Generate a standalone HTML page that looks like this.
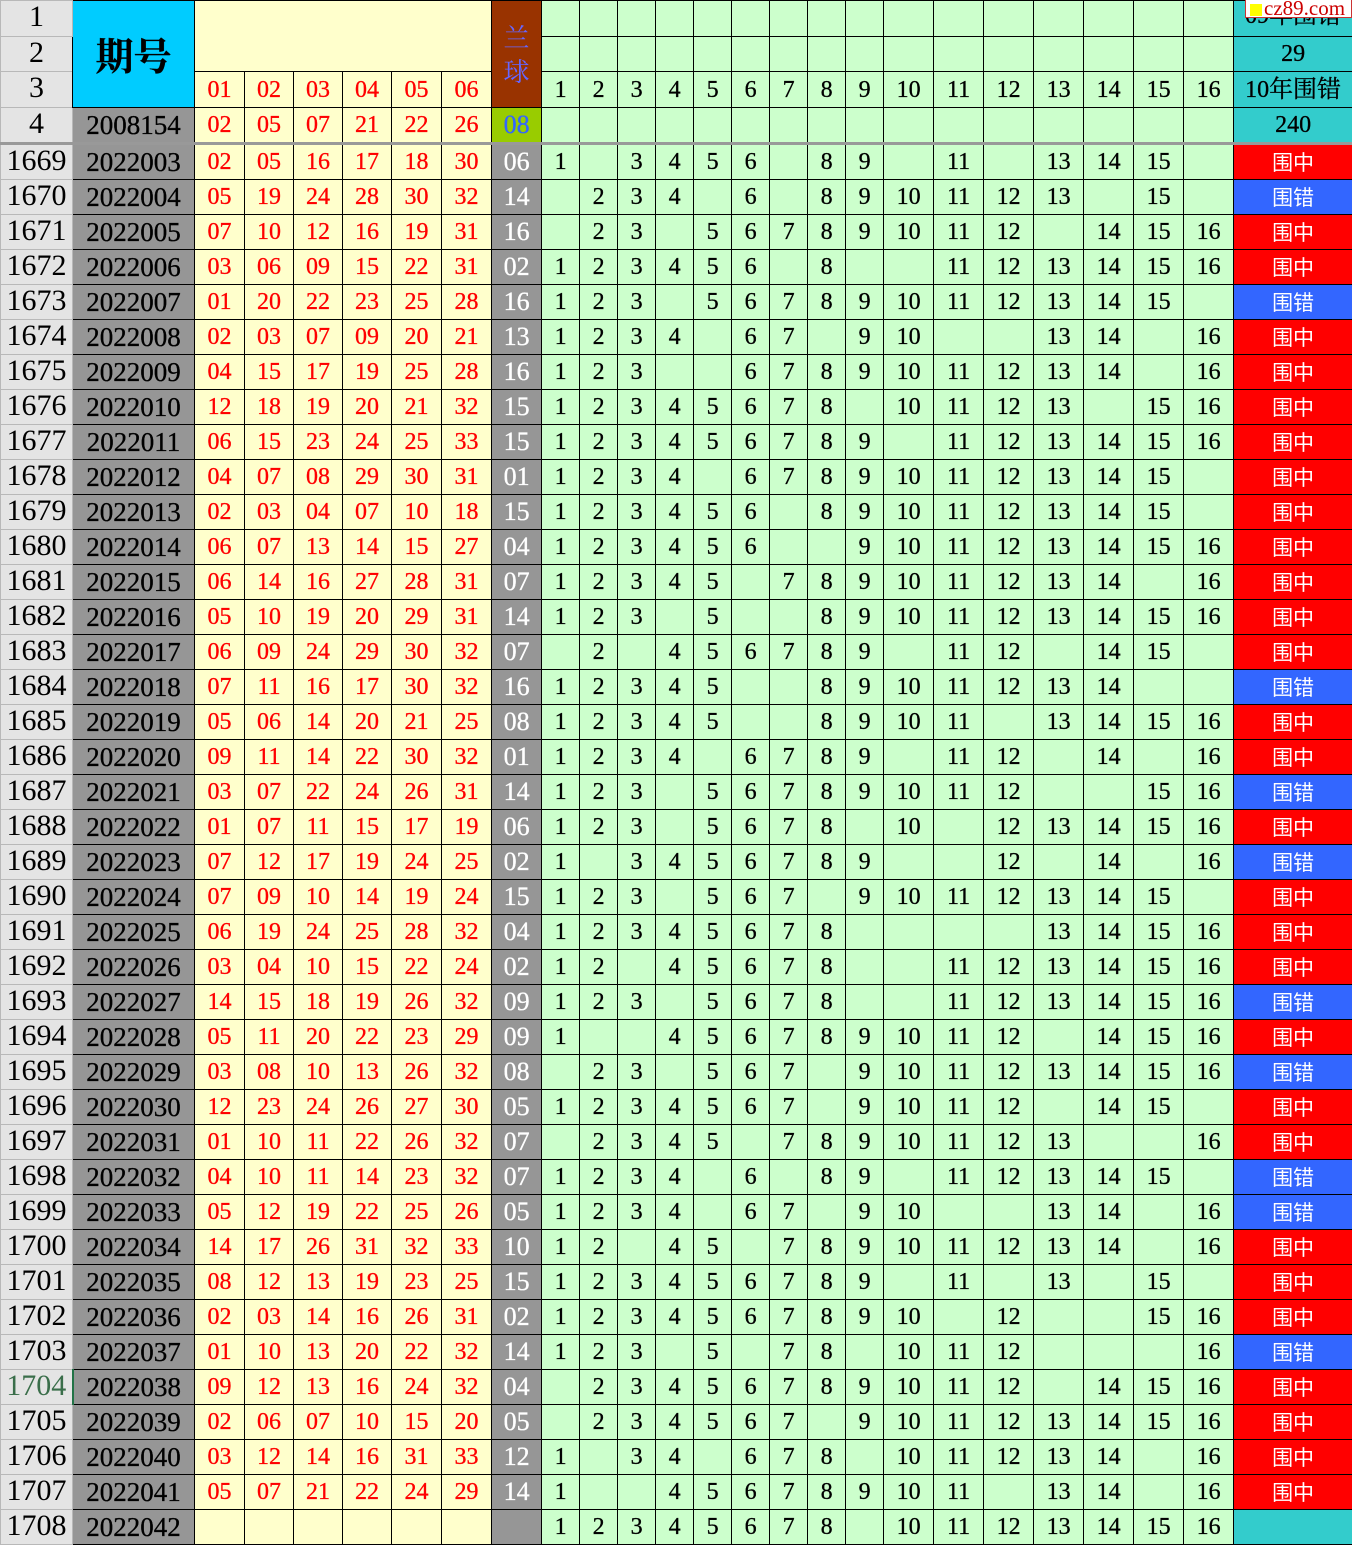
<!DOCTYPE html><html><head><meta charset="utf-8"><style>
body{margin:0;width:1352px;height:1542px;overflow:hidden;background:#fff}
table{border-collapse:collapse;table-layout:fixed;width:1352px;font-family:"Liberation Serif","Noto Serif CJK SC",serif}
tr{height:35px}
td,th{border:1px solid #000;padding:0;text-align:center;font-size:24px;line-height:34px;background:#ccffcc;color:#000;font-weight:normal;overflow:hidden;white-space:nowrap;vertical-align:bottom;-webkit-text-stroke:0.3px}
th{background:#e4e4e4;border-color:#b8b8b8;font-size:30px;line-height:32px;vertical-align:top;-webkit-text-stroke:0}
td.p{background:#969696;font-size:27px}
td.r{background:#ffffcc;color:#f00}
td.b{background:#969696;color:#fff;font-size:26px}
td.zh{background:#f00;color:#fff;font-family:"Noto Sans CJK SC",sans-serif;font-size:21px;-webkit-text-stroke:0}
td.cu{background:#3366ff;color:#fff;font-family:"Noto Sans CJK SC",sans-serif;font-size:21px;-webkit-text-stroke:0}
td.t{background:#33cccc;font-size:24px}
tr.sep td,tr.sep th{border-top:3px solid #999}
.wm{position:absolute;left:1245px;top:0;width:105px;height:17px;background:#fff;border:1px solid #c33;border-top:0;font:21px/17px "Liberation Serif",serif;color:#c00;overflow:hidden;white-space:nowrap}
.wm i{display:inline-block;width:12px;height:12px;background:#ff0;margin:0 2px 0 4px;vertical-align:-1px}
</style></head><body>
<table>
<colgroup><col style="width:72px"><col style="width:122px"><col style="width:50px"><col style="width:49px"><col style="width:49px"><col style="width:49px"><col style="width:50px"><col style="width:50px"><col style="width:50px"><col style="width:38px"><col style="width:38px"><col style="width:38px"><col style="width:38px"><col style="width:38px"><col style="width:38px"><col style="width:38px"><col style="width:38px"><col style="width:38px"><col style="width:50px"><col style="width:50px"><col style="width:50px"><col style="width:50px"><col style="width:50px"><col style="width:50px"><col style="width:50px"><col style="width:119px"></colgroup>
<tr style="height:36px"><th>1</th><td rowspan="3" style="background:#00ccff;font-size:38px;line-height:40px;vertical-align:middle;font-family:'Noto Serif CJK SC',serif;font-weight:bold">期号</td><td class="r" colspan="6" rowspan="2"></td><td rowspan="3" style="background:#993300;color:#6666ff;font-size:26px;line-height:34px;vertical-align:middle;font-family:'Noto Serif CJK SC',serif;-webkit-text-stroke:0">兰<br>球</td><td></td><td></td><td></td><td></td><td></td><td></td><td></td><td></td><td></td><td></td><td></td><td></td><td></td><td></td><td></td><td></td><td class="t" style="line-height:30px;vertical-align:top">09年围错</td></tr>
<tr><th>2</th><td></td><td></td><td></td><td></td><td></td><td></td><td></td><td></td><td></td><td></td><td></td><td></td><td></td><td></td><td></td><td></td><td class="t">29</td></tr>
<tr style="height:36px"><th>3</th><td class="r">01</td><td class="r">02</td><td class="r">03</td><td class="r">04</td><td class="r">05</td><td class="r">06</td><td>1</td><td>2</td><td>3</td><td>4</td><td>5</td><td>6</td><td>7</td><td>8</td><td>9</td><td>10</td><td>11</td><td>12</td><td>13</td><td>14</td><td>15</td><td>16</td><td class="t">10年围错</td></tr>
<tr><th>4</th><td class="p">2008154</td><td class="r">02</td><td class="r">05</td><td class="r">07</td><td class="r">21</td><td class="r">22</td><td class="r">26</td><td style="background:#99cc00;color:#3366ff;font-size:26px">08</td><td></td><td></td><td></td><td></td><td></td><td></td><td></td><td></td><td></td><td></td><td></td><td></td><td></td><td></td><td></td><td></td><td class="t">240</td></tr>
<tr class="sep"><th>1669</th><td class="p">2022003</td><td class="r">02</td><td class="r">05</td><td class="r">16</td><td class="r">17</td><td class="r">18</td><td class="r">30</td><td class="b">06</td><td>1</td><td></td><td>3</td><td>4</td><td>5</td><td>6</td><td></td><td>8</td><td>9</td><td></td><td>11</td><td></td><td>13</td><td>14</td><td>15</td><td></td><td class="zh">围中</td></tr>
<tr><th>1670</th><td class="p">2022004</td><td class="r">05</td><td class="r">19</td><td class="r">24</td><td class="r">28</td><td class="r">30</td><td class="r">32</td><td class="b">14</td><td></td><td>2</td><td>3</td><td>4</td><td></td><td>6</td><td></td><td>8</td><td>9</td><td>10</td><td>11</td><td>12</td><td>13</td><td></td><td>15</td><td></td><td class="cu">围错</td></tr>
<tr><th>1671</th><td class="p">2022005</td><td class="r">07</td><td class="r">10</td><td class="r">12</td><td class="r">16</td><td class="r">19</td><td class="r">31</td><td class="b">16</td><td></td><td>2</td><td>3</td><td></td><td>5</td><td>6</td><td>7</td><td>8</td><td>9</td><td>10</td><td>11</td><td>12</td><td></td><td>14</td><td>15</td><td>16</td><td class="zh">围中</td></tr>
<tr><th>1672</th><td class="p">2022006</td><td class="r">03</td><td class="r">06</td><td class="r">09</td><td class="r">15</td><td class="r">22</td><td class="r">31</td><td class="b">02</td><td>1</td><td>2</td><td>3</td><td>4</td><td>5</td><td>6</td><td></td><td>8</td><td></td><td></td><td>11</td><td>12</td><td>13</td><td>14</td><td>15</td><td>16</td><td class="zh">围中</td></tr>
<tr><th>1673</th><td class="p">2022007</td><td class="r">01</td><td class="r">20</td><td class="r">22</td><td class="r">23</td><td class="r">25</td><td class="r">28</td><td class="b">16</td><td>1</td><td>2</td><td>3</td><td></td><td>5</td><td>6</td><td>7</td><td>8</td><td>9</td><td>10</td><td>11</td><td>12</td><td>13</td><td>14</td><td>15</td><td></td><td class="cu">围错</td></tr>
<tr><th>1674</th><td class="p">2022008</td><td class="r">02</td><td class="r">03</td><td class="r">07</td><td class="r">09</td><td class="r">20</td><td class="r">21</td><td class="b">13</td><td>1</td><td>2</td><td>3</td><td>4</td><td></td><td>6</td><td>7</td><td></td><td>9</td><td>10</td><td></td><td></td><td>13</td><td>14</td><td></td><td>16</td><td class="zh">围中</td></tr>
<tr><th>1675</th><td class="p">2022009</td><td class="r">04</td><td class="r">15</td><td class="r">17</td><td class="r">19</td><td class="r">25</td><td class="r">28</td><td class="b">16</td><td>1</td><td>2</td><td>3</td><td></td><td></td><td>6</td><td>7</td><td>8</td><td>9</td><td>10</td><td>11</td><td>12</td><td>13</td><td>14</td><td></td><td>16</td><td class="zh">围中</td></tr>
<tr><th>1676</th><td class="p">2022010</td><td class="r">12</td><td class="r">18</td><td class="r">19</td><td class="r">20</td><td class="r">21</td><td class="r">32</td><td class="b">15</td><td>1</td><td>2</td><td>3</td><td>4</td><td>5</td><td>6</td><td>7</td><td>8</td><td></td><td>10</td><td>11</td><td>12</td><td>13</td><td></td><td>15</td><td>16</td><td class="zh">围中</td></tr>
<tr><th>1677</th><td class="p">2022011</td><td class="r">06</td><td class="r">15</td><td class="r">23</td><td class="r">24</td><td class="r">25</td><td class="r">33</td><td class="b">15</td><td>1</td><td>2</td><td>3</td><td>4</td><td>5</td><td>6</td><td>7</td><td>8</td><td>9</td><td></td><td>11</td><td>12</td><td>13</td><td>14</td><td>15</td><td>16</td><td class="zh">围中</td></tr>
<tr><th>1678</th><td class="p">2022012</td><td class="r">04</td><td class="r">07</td><td class="r">08</td><td class="r">29</td><td class="r">30</td><td class="r">31</td><td class="b">01</td><td>1</td><td>2</td><td>3</td><td>4</td><td></td><td>6</td><td>7</td><td>8</td><td>9</td><td>10</td><td>11</td><td>12</td><td>13</td><td>14</td><td>15</td><td></td><td class="zh">围中</td></tr>
<tr><th>1679</th><td class="p">2022013</td><td class="r">02</td><td class="r">03</td><td class="r">04</td><td class="r">07</td><td class="r">10</td><td class="r">18</td><td class="b">15</td><td>1</td><td>2</td><td>3</td><td>4</td><td>5</td><td>6</td><td></td><td>8</td><td>9</td><td>10</td><td>11</td><td>12</td><td>13</td><td>14</td><td>15</td><td></td><td class="zh">围中</td></tr>
<tr><th>1680</th><td class="p">2022014</td><td class="r">06</td><td class="r">07</td><td class="r">13</td><td class="r">14</td><td class="r">15</td><td class="r">27</td><td class="b">04</td><td>1</td><td>2</td><td>3</td><td>4</td><td>5</td><td>6</td><td></td><td></td><td>9</td><td>10</td><td>11</td><td>12</td><td>13</td><td>14</td><td>15</td><td>16</td><td class="zh">围中</td></tr>
<tr><th>1681</th><td class="p">2022015</td><td class="r">06</td><td class="r">14</td><td class="r">16</td><td class="r">27</td><td class="r">28</td><td class="r">31</td><td class="b">07</td><td>1</td><td>2</td><td>3</td><td>4</td><td>5</td><td></td><td>7</td><td>8</td><td>9</td><td>10</td><td>11</td><td>12</td><td>13</td><td>14</td><td></td><td>16</td><td class="zh">围中</td></tr>
<tr><th>1682</th><td class="p">2022016</td><td class="r">05</td><td class="r">10</td><td class="r">19</td><td class="r">20</td><td class="r">29</td><td class="r">31</td><td class="b">14</td><td>1</td><td>2</td><td>3</td><td></td><td>5</td><td></td><td></td><td>8</td><td>9</td><td>10</td><td>11</td><td>12</td><td>13</td><td>14</td><td>15</td><td>16</td><td class="zh">围中</td></tr>
<tr><th>1683</th><td class="p">2022017</td><td class="r">06</td><td class="r">09</td><td class="r">24</td><td class="r">29</td><td class="r">30</td><td class="r">32</td><td class="b">07</td><td></td><td>2</td><td></td><td>4</td><td>5</td><td>6</td><td>7</td><td>8</td><td>9</td><td></td><td>11</td><td>12</td><td></td><td>14</td><td>15</td><td></td><td class="zh">围中</td></tr>
<tr><th>1684</th><td class="p">2022018</td><td class="r">07</td><td class="r">11</td><td class="r">16</td><td class="r">17</td><td class="r">30</td><td class="r">32</td><td class="b">16</td><td>1</td><td>2</td><td>3</td><td>4</td><td>5</td><td></td><td></td><td>8</td><td>9</td><td>10</td><td>11</td><td>12</td><td>13</td><td>14</td><td></td><td></td><td class="cu">围错</td></tr>
<tr><th>1685</th><td class="p">2022019</td><td class="r">05</td><td class="r">06</td><td class="r">14</td><td class="r">20</td><td class="r">21</td><td class="r">25</td><td class="b">08</td><td>1</td><td>2</td><td>3</td><td>4</td><td>5</td><td></td><td></td><td>8</td><td>9</td><td>10</td><td>11</td><td></td><td>13</td><td>14</td><td>15</td><td>16</td><td class="zh">围中</td></tr>
<tr><th>1686</th><td class="p">2022020</td><td class="r">09</td><td class="r">11</td><td class="r">14</td><td class="r">22</td><td class="r">30</td><td class="r">32</td><td class="b">01</td><td>1</td><td>2</td><td>3</td><td>4</td><td></td><td>6</td><td>7</td><td>8</td><td>9</td><td></td><td>11</td><td>12</td><td></td><td>14</td><td></td><td>16</td><td class="zh">围中</td></tr>
<tr><th>1687</th><td class="p">2022021</td><td class="r">03</td><td class="r">07</td><td class="r">22</td><td class="r">24</td><td class="r">26</td><td class="r">31</td><td class="b">14</td><td>1</td><td>2</td><td>3</td><td></td><td>5</td><td>6</td><td>7</td><td>8</td><td>9</td><td>10</td><td>11</td><td>12</td><td></td><td></td><td>15</td><td>16</td><td class="cu">围错</td></tr>
<tr><th>1688</th><td class="p">2022022</td><td class="r">01</td><td class="r">07</td><td class="r">11</td><td class="r">15</td><td class="r">17</td><td class="r">19</td><td class="b">06</td><td>1</td><td>2</td><td>3</td><td></td><td>5</td><td>6</td><td>7</td><td>8</td><td></td><td>10</td><td></td><td>12</td><td>13</td><td>14</td><td>15</td><td>16</td><td class="zh">围中</td></tr>
<tr><th>1689</th><td class="p">2022023</td><td class="r">07</td><td class="r">12</td><td class="r">17</td><td class="r">19</td><td class="r">24</td><td class="r">25</td><td class="b">02</td><td>1</td><td></td><td>3</td><td>4</td><td>5</td><td>6</td><td>7</td><td>8</td><td>9</td><td></td><td></td><td>12</td><td></td><td>14</td><td></td><td>16</td><td class="cu">围错</td></tr>
<tr><th>1690</th><td class="p">2022024</td><td class="r">07</td><td class="r">09</td><td class="r">10</td><td class="r">14</td><td class="r">19</td><td class="r">24</td><td class="b">15</td><td>1</td><td>2</td><td>3</td><td></td><td>5</td><td>6</td><td>7</td><td></td><td>9</td><td>10</td><td>11</td><td>12</td><td>13</td><td>14</td><td>15</td><td></td><td class="zh">围中</td></tr>
<tr><th>1691</th><td class="p">2022025</td><td class="r">06</td><td class="r">19</td><td class="r">24</td><td class="r">25</td><td class="r">28</td><td class="r">32</td><td class="b">04</td><td>1</td><td>2</td><td>3</td><td>4</td><td>5</td><td>6</td><td>7</td><td>8</td><td></td><td></td><td></td><td></td><td>13</td><td>14</td><td>15</td><td>16</td><td class="zh">围中</td></tr>
<tr><th>1692</th><td class="p">2022026</td><td class="r">03</td><td class="r">04</td><td class="r">10</td><td class="r">15</td><td class="r">22</td><td class="r">24</td><td class="b">02</td><td>1</td><td>2</td><td></td><td>4</td><td>5</td><td>6</td><td>7</td><td>8</td><td></td><td></td><td>11</td><td>12</td><td>13</td><td>14</td><td>15</td><td>16</td><td class="zh">围中</td></tr>
<tr><th>1693</th><td class="p">2022027</td><td class="r">14</td><td class="r">15</td><td class="r">18</td><td class="r">19</td><td class="r">26</td><td class="r">32</td><td class="b">09</td><td>1</td><td>2</td><td>3</td><td></td><td>5</td><td>6</td><td>7</td><td>8</td><td></td><td></td><td>11</td><td>12</td><td>13</td><td>14</td><td>15</td><td>16</td><td class="cu">围错</td></tr>
<tr><th>1694</th><td class="p">2022028</td><td class="r">05</td><td class="r">11</td><td class="r">20</td><td class="r">22</td><td class="r">23</td><td class="r">29</td><td class="b">09</td><td>1</td><td></td><td></td><td>4</td><td>5</td><td>6</td><td>7</td><td>8</td><td>9</td><td>10</td><td>11</td><td>12</td><td></td><td>14</td><td>15</td><td>16</td><td class="zh">围中</td></tr>
<tr><th>1695</th><td class="p">2022029</td><td class="r">03</td><td class="r">08</td><td class="r">10</td><td class="r">13</td><td class="r">26</td><td class="r">32</td><td class="b">08</td><td></td><td>2</td><td>3</td><td></td><td>5</td><td>6</td><td>7</td><td></td><td>9</td><td>10</td><td>11</td><td>12</td><td>13</td><td>14</td><td>15</td><td>16</td><td class="cu">围错</td></tr>
<tr><th>1696</th><td class="p">2022030</td><td class="r">12</td><td class="r">23</td><td class="r">24</td><td class="r">26</td><td class="r">27</td><td class="r">30</td><td class="b">05</td><td>1</td><td>2</td><td>3</td><td>4</td><td>5</td><td>6</td><td>7</td><td></td><td>9</td><td>10</td><td>11</td><td>12</td><td></td><td>14</td><td>15</td><td></td><td class="zh">围中</td></tr>
<tr><th>1697</th><td class="p">2022031</td><td class="r">01</td><td class="r">10</td><td class="r">11</td><td class="r">22</td><td class="r">26</td><td class="r">32</td><td class="b">07</td><td></td><td>2</td><td>3</td><td>4</td><td>5</td><td></td><td>7</td><td>8</td><td>9</td><td>10</td><td>11</td><td>12</td><td>13</td><td></td><td></td><td>16</td><td class="zh">围中</td></tr>
<tr><th>1698</th><td class="p">2022032</td><td class="r">04</td><td class="r">10</td><td class="r">11</td><td class="r">14</td><td class="r">23</td><td class="r">32</td><td class="b">07</td><td>1</td><td>2</td><td>3</td><td>4</td><td></td><td>6</td><td></td><td>8</td><td>9</td><td></td><td>11</td><td>12</td><td>13</td><td>14</td><td>15</td><td></td><td class="cu">围错</td></tr>
<tr><th>1699</th><td class="p">2022033</td><td class="r">05</td><td class="r">12</td><td class="r">19</td><td class="r">22</td><td class="r">25</td><td class="r">26</td><td class="b">05</td><td>1</td><td>2</td><td>3</td><td>4</td><td></td><td>6</td><td>7</td><td></td><td>9</td><td>10</td><td></td><td></td><td>13</td><td>14</td><td></td><td>16</td><td class="cu">围错</td></tr>
<tr><th>1700</th><td class="p">2022034</td><td class="r">14</td><td class="r">17</td><td class="r">26</td><td class="r">31</td><td class="r">32</td><td class="r">33</td><td class="b">10</td><td>1</td><td>2</td><td></td><td>4</td><td>5</td><td></td><td>7</td><td>8</td><td>9</td><td>10</td><td>11</td><td>12</td><td>13</td><td>14</td><td></td><td>16</td><td class="zh">围中</td></tr>
<tr><th>1701</th><td class="p">2022035</td><td class="r">08</td><td class="r">12</td><td class="r">13</td><td class="r">19</td><td class="r">23</td><td class="r">25</td><td class="b">15</td><td>1</td><td>2</td><td>3</td><td>4</td><td>5</td><td>6</td><td>7</td><td>8</td><td>9</td><td></td><td>11</td><td></td><td>13</td><td></td><td>15</td><td></td><td class="zh">围中</td></tr>
<tr><th>1702</th><td class="p">2022036</td><td class="r">02</td><td class="r">03</td><td class="r">14</td><td class="r">16</td><td class="r">26</td><td class="r">31</td><td class="b">02</td><td>1</td><td>2</td><td>3</td><td>4</td><td>5</td><td>6</td><td>7</td><td>8</td><td>9</td><td>10</td><td></td><td>12</td><td></td><td></td><td>15</td><td>16</td><td class="zh">围中</td></tr>
<tr><th>1703</th><td class="p">2022037</td><td class="r">01</td><td class="r">10</td><td class="r">13</td><td class="r">20</td><td class="r">22</td><td class="r">32</td><td class="b">14</td><td>1</td><td>2</td><td>3</td><td></td><td>5</td><td></td><td>7</td><td>8</td><td></td><td>10</td><td>11</td><td>12</td><td></td><td></td><td></td><td>16</td><td class="cu">围错</td></tr>
<tr><th style="color:#3a6e4a;border-right:2px solid #217346">1704</th><td class="p">2022038</td><td class="r">09</td><td class="r">12</td><td class="r">13</td><td class="r">16</td><td class="r">24</td><td class="r">32</td><td class="b">04</td><td></td><td>2</td><td>3</td><td>4</td><td>5</td><td>6</td><td>7</td><td>8</td><td>9</td><td>10</td><td>11</td><td>12</td><td></td><td>14</td><td>15</td><td>16</td><td class="zh">围中</td></tr>
<tr><th>1705</th><td class="p">2022039</td><td class="r">02</td><td class="r">06</td><td class="r">07</td><td class="r">10</td><td class="r">15</td><td class="r">20</td><td class="b">05</td><td></td><td>2</td><td>3</td><td>4</td><td>5</td><td>6</td><td>7</td><td></td><td>9</td><td>10</td><td>11</td><td>12</td><td>13</td><td>14</td><td>15</td><td>16</td><td class="zh">围中</td></tr>
<tr><th>1706</th><td class="p">2022040</td><td class="r">03</td><td class="r">12</td><td class="r">14</td><td class="r">16</td><td class="r">31</td><td class="r">33</td><td class="b">12</td><td>1</td><td></td><td>3</td><td>4</td><td></td><td>6</td><td>7</td><td>8</td><td></td><td>10</td><td>11</td><td>12</td><td>13</td><td>14</td><td></td><td>16</td><td class="zh">围中</td></tr>
<tr><th>1707</th><td class="p">2022041</td><td class="r">05</td><td class="r">07</td><td class="r">21</td><td class="r">22</td><td class="r">24</td><td class="r">29</td><td class="b">14</td><td>1</td><td></td><td></td><td>4</td><td>5</td><td>6</td><td>7</td><td>8</td><td>9</td><td>10</td><td>11</td><td></td><td>13</td><td>14</td><td></td><td>16</td><td class="zh">围中</td></tr>
<tr><th>1708</th><td class="p">2022042</td><td class="r"></td><td class="r"></td><td class="r"></td><td class="r"></td><td class="r"></td><td class="r"></td><td class="b"></td><td>1</td><td>2</td><td>3</td><td>4</td><td>5</td><td>6</td><td>7</td><td>8</td><td></td><td>10</td><td>11</td><td>12</td><td>13</td><td>14</td><td>15</td><td>16</td><td class="t"></td></tr>
</table>
<div class="wm"><i></i>cz89.com</div>
</body></html>
